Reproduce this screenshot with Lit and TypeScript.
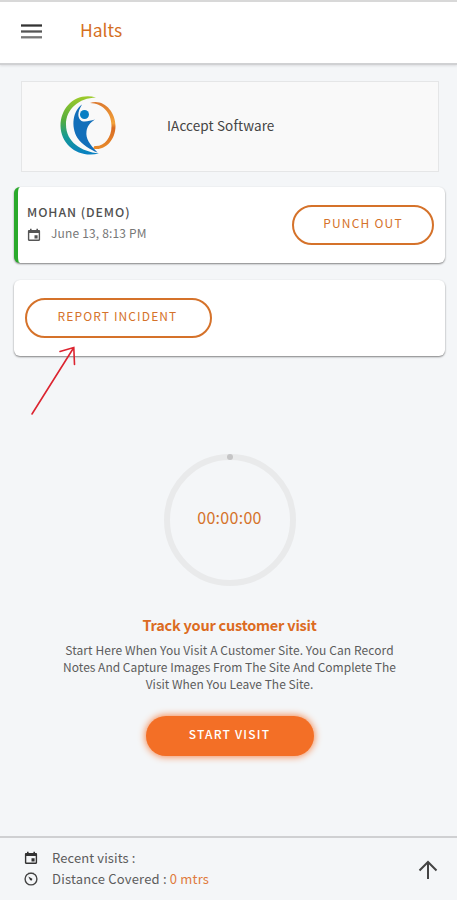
import { LitElement, html, css } from "lit";
import { customElement } from "lit/decorators.js";

const calendar = html`<svg class="ico" viewBox="0 0 14 14" aria-hidden="true">
  <path fill="currentColor" fill-rule="evenodd" d="M3 .7h1.6V2h4.8V.7H11V2h.9c.7 0 1.2.5 1.2 1.2v8.6c0 .7-.5 1.2-1.2 1.2H2.100c-.7 0-1.200-.5-1.200-1.200V3.200C.9 2.500 1.400 2 2.100 2H3zM2.300 5v6.600h9.400V5zM7.500 7.300h3.100v3.100H7.500z"/>
</svg>`;

@customElement("app-root")
export class AppRoot extends LitElement {
  static styles = css`
    :host {
      display: flex;
      flex-direction: column;
      position: relative;
      box-sizing: border-box;
      width: 457px;
      height: 900px;
      overflow: hidden;
      background: #f4f6f8;
      color: #444;
      font-family: "Noto Sans CJK SC", "Noto Sans", sans-serif;
      font-size: 13px;
      line-height: 20px;
      white-space: nowrap;
    }
    * { box-sizing: border-box; }
    svg { display: block; flex: none; }
    header {
      height: 65px;
      flex: none;
      display: flex;
      align-items: center;
      padding: 0 0 3px 21px;
      background: #fff;
      border-top: 2px solid #d8d8d8;
      border-bottom: 2px solid #d0d1d3;
      box-shadow: 0 1px 2px #dcdde0;
    }
    h1 {
      margin: 0 0 3px 38px;
      font-size: 17.500px;
      font-weight: 400;
      color: #d5701f;
    }
    .company {
      height: 91px;
      flex: none;
      margin: 16px 18px 0 21px;
      display: flex;
      align-items: center;
      background: #f9f9f9;
      border: 1px solid #e5e6e7;
      padding: 0 0 1px 37px;
      font-size: 13.500px;
      letter-spacing: .12px;
      color: #444;
    }
    .company span { margin-left: 45px; padding-bottom: 3px; }
    .card {
      height: 76px;
      flex: none;
      margin: 15px 12px 0 14px;
      display: flex;
      align-items: center;
      background: #fff;
      border-radius: 6px;
      box-shadow: 0 1px 2px rgba(0,0,0,.48);
    }
    .user { border-left: 4px solid #2aaa2c; padding: 0 11px 0 9px; justify-content: space-between; }
    .name { font-size: 12.300px; font-weight: 500; letter-spacing: .94px; color: #505050; }
    .user > div { padding-bottom: 5px; }
    .when { display: flex; align-items: center; gap: 10px; color: #777; font-size: 12px; letter-spacing: .16px; margin-top: 1px; }
    .when .ico { position: relative; top: 2px; color: #555; }
    .ico { width: 14px; height: 14px; color: #444; }
    .report { margin-top: 17px; padding-left: 11px; }
    .btn {
      height: 40px;
      display: flex;
      align-items: center;
      justify-content: center;
      border: 2px solid #d5722a;
      border-radius: 20px;
      padding: 0 0 4px;
      background: none;
      font: inherit;
      font-size: 12px;
      letter-spacing: 1.200px;
      color: #d5722a;
    }
    .out { width: 142px; }
    .incident { width: 187px; letter-spacing: 1.120px; padding-right: 2px; }
    main { flex: 1; display: flex; flex-direction: column; align-items: center; padding-top: 98px; }
    .dial {
      position: relative;
      width: 132px;
      height: 132px;
      margin-left: 2px;
      border: 6px solid #e9eaeb;
      border-radius: 50%;
      display: flex;
      align-items: center;
      justify-content: center;
      font-size: 16px;
      letter-spacing: .3px;
      padding-bottom: 6px;
      color: #d5722a;
    }
    .dial::before {
      content: "";
      position: absolute;
      top: -6px;
      left: 57px;
      width: 6px;
      height: 6px;
      border-radius: 50%;
      background: #c5c5c6;
    }
    h2 { margin: 29px 0 0 2px; font-size: 14.500px; letter-spacing: -.22px; line-height: 20px; font-weight: 600; color: #dc6b22; }
    p { margin: 6px 0 0 2px; text-align: center; font-size: 12px; line-height: 17px; color: #5c5c5c; }
    .first { letter-spacing: .08px; }
    .start {
      width: 168px;
      margin: 24px 0 0 2px;
      border: 0;
      color: #fff;
      background: #f36f26;
      font-weight: 500;
      box-shadow: 0 0 7px 1px #f58c55;
    }
    footer {
      height: 64px;
      flex: none;
      display: flex;
      align-items: center;
      justify-content: space-between;
      border-top: 2px solid #cfd0d2;
      padding: 2px 19px 0 24px;
    }
    .row { display: flex; align-items: center; height: 21px; gap: 14px; color: #5c5c5c; letter-spacing: .1px; }
    .row span { padding-bottom: 3px; }
    .row .ico { color: #333; position: relative; top: -2px; }
    .distance { letter-spacing: .19px; }
    b { font-weight: 400; color: #e07b3c; }
    .pointer { position: absolute; left: 28px; top: 342px; }
  `;

  render() {
    return html`
      <header>
        <svg width="21" height="15" viewBox="0 0 21 15">
          <path stroke="#333" stroke-width="2.300" d="M0 1.500h21"/>
          <path stroke="#555" stroke-width="2.300" d="M0 7.500h21"/>
          <path stroke="#777" stroke-width="2.300" d="M0 13.300h21"/>
        </svg>
        <h1>Halts</h1>
      </header>
      <section class="company">
        <svg width="63" height="64" viewBox="0 0 63 64">
          <defs>
            <linearGradient id="g" x1="0" y1="0" x2="0" y2="1">
              <stop offset="0" stop-color="#9fcb2b"/><stop offset=".4" stop-color="#55ad3c"/>
              <stop offset=".7" stop-color="#159a95"/><stop offset="1" stop-color="#087fc4"/>
            </linearGradient>
            <linearGradient id="o" x1="0" y1="0" x2="0" y2="1">
              <stop offset="0" stop-color="#dc792e"/><stop offset=".45" stop-color="#f3a33b"/><stop offset=".55" stop-color="#d96c22"/><stop offset="1" stop-color="#e88b2c"/>
            </linearGradient>
          </defs>
          <path fill="url(#g)" d="M37 3.500C17-2 1.500 13 1.500 32 2 51.500 20 64.500 40 59.500 22 57.500 7 48 7 30.500 7 15 20 4 37 3.500z"/>
          <path fill="url(#o)" d="M31 9C44 4.500 56.500 17 56.500 32 56.500 47 45 57.500 34 54.500l1.500-2.500C45 53 52.500 44 52.500 32 52.500 18 43 9.500 31 9z"/>
          <circle cx="25.500" cy="20.500" r="4.500" fill="#087fc4"/>
          <path fill="#126fba" d="M23 10.500C14 17 11.500 32 18.500 44c4.500 6.500 13 12 20 14.500-8-8-12-14.500-11-21C28 32.500 31 28.500 36 25.500c-5 1-9.500 3-13.500 1.500-4-3-4.500-8.500.5-16.500z"/>
        </svg>
        <span>IAccept Software</span>
      </section>
      <section class="card user">
        <div>
          <div class="name">MOHAN (DEMO)</div>
          <div class="when">${calendar}<span>June 13, 8:13 PM</span></div>
        </div>
        <button class="btn out">PUNCH OUT</button>
      </section>
      <section class="card report"><button class="btn incident">REPORT INCIDENT</button></section>
      <main>
        <div class="dial">00:00:00</div>
        <h2>Track your customer visit</h2>
        <p><span class="first">Start Here When You Visit A Customer Site. You Can Record</span><br>Notes And Capture Images From The Site And Complete The<br>Visit When You Leave The Site.</p>
        <button class="btn start">START VISIT</button>
      </main>
      <footer>
        <div>
          <div class="row">${calendar}<span>Recent visits :</span></div>
          <div class="row distance">
            <svg class="ico" viewBox="0 0 14 14"><circle cx="7" cy="7" r="5.900" fill="none" stroke="#444" stroke-width="1.400"/><path d="M4.300 4.500 6.200 8.200 8 8.500 8.300 6.800z" fill="#333"/><path d="M4 1.300h6" stroke="#444"/></svg>
            <span>Distance Covered : <b>0 mtrs</b></span>
          </div>
        </div>
        <svg width="20" height="20" viewBox="0 0 20 20" fill="none" stroke="#444" stroke-width="2"><path d="M10 19V2M1.500 10.500 10 2l8.500 8.500"/></svg>
      </footer>
      <svg class="pointer" width="52" height="76" viewBox="0 0 52 76" fill="none" stroke="#dc2430" stroke-width="1.600" stroke-linecap="round"><path d="M4 72 45.500 6M32 9.500 45.800 5.500 46.500 22.500"/></svg>
    `;
  }
}
